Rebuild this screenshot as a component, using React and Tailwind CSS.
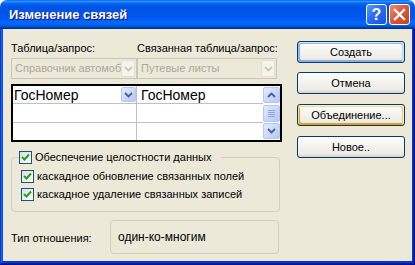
import React from 'react';

const btnBase =
  "h-[22px] w-full rounded-[3px] border border-[#003c74] bg-[linear-gradient(180deg,#ffffff_0%,#f4f3ee_45%,#ecebe6_85%,#d6d0c5_100%)] text-[11px] text-black flex items-center justify-center";

function TitleButtons() {
  return (
    <div className="flex gap-[2px]">
      <div className="w-[21px] h-[21px] rounded-[3px] border border-white bg-[linear-gradient(135deg,#5a9bff_0%,#2a6cf0_45%,#1a55dc_100%)] flex items-center justify-center text-white font-bold text-[16px] leading-none">
        ?
      </div>
      <div className="w-[21px] h-[21px] rounded-[3px] border border-white bg-[linear-gradient(135deg,#f08d6b_0%,#e0593a_45%,#c63f1c_100%)] flex items-center justify-center">
        <svg width="13" height="13" viewBox="0 0 13 13">
          <path d="M2 2 L11 11 M11 2 L2 11" stroke="#fff" strokeWidth="2.4" strokeLinecap="square" />
        </svg>
      </div>
    </div>
  );
}

function Chevron({ color = "#4d6185", up = false }) {
  return (
    <svg width="9" height="6" viewBox="0 0 9 6">
      <path
        d={up ? "M1 5 L4.5 1.5 L8 5" : "M1 1 L4.5 4.5 L8 1"}
        fill="none"
        stroke={color}
        strokeWidth="1.8"
      />
    </svg>
  );
}

function DisabledCombo({ text, className }) {
  return (
    <div className={"h-[21px] border border-[#c9c7ba] flex items-center justify-between pl-[3px] pr-[1px] " + className}>
      <span className="text-[#aca899] text-[11px] whitespace-nowrap">{text}</span>
      <div className="w-[14px] h-[17px] shrink-0 rounded-[2px] border border-[#e1e0d6] bg-[#f5f4ea] flex items-center justify-center">
        <Chevron color="#c9c7ba" />
      </div>
    </div>
  );
}

function BlueBtn({ children, className = "" }) {
  return (
    <div className={"rounded-[2px] border border-[#b4c8f6] bg-[linear-gradient(135deg,#e3ebff_0%,#c6d6fc_60%,#b4c8f6_100%)] flex items-center justify-center " + className}>
      {children}
    </div>
  );
}

function Check() {
  return (
    <div className="w-[13px] h-[13px] shrink-0 border border-[#1c5180] bg-[linear-gradient(135deg,#dcdcd7_0%,#ffffff_100%)] flex items-center justify-center">
      <svg width="9" height="9" viewBox="0 0 9 9">
        <path d="M1 4 L3.5 6.5 L8 1.5" fill="none" stroke="#21a121" strokeWidth="2" />
      </svg>
    </div>
  );
}

export default function App() {
  return (
    <div className="w-[415px] h-[265px] bg-white font-['Liberation_Sans',Arial,sans-serif] flex flex-col">
      <div className="h-[29px] shrink-0 rounded-t-[7px] bg-[linear-gradient(to_bottom,#0058ee_0%,#3593ff_4%,#288eff_6%,#127dff_8%,#036ffc_10%,#0262ee_14%,#0057e5_20%,#0054e3_24%,#0055eb_56%,#005bf5_66%,#026afe_76%,#0062ef_86%,#0052d6_92%,#0040ab_94%,#003092_100%)] flex items-center justify-between pl-[9px] pr-[5px]">
        <span className="text-white font-bold text-[13px] [text-shadow:1px_1px_#0f1089]">Изменение связей</span>
        <TitleButtons />
      </div>
      <div className="flex-1 bg-[#0831d9] px-[3px] pb-[4px] shadow-[inset_-1px_-1px_#00138c,inset_1px_0_#0831d9,inset_-2px_-2px_#001ea0,inset_2px_0_#166aee,inset_-3px_-3px_#003bda,inset_3px_0_#0855dd]">
        <div className="h-full bg-[#ece9d8] flex pl-[8px] pt-[12px] text-[11px] text-black">
          <div className="w-[271px] flex flex-col">
            <div className="flex h-[14px] leading-[14px] mb-[3px]">
              <span className="w-[126px]">Таблица/запрос:</span>
              <span>Связанная таблица/запрос:</span>
            </div>
            <div className="flex">
              <DisabledCombo text="Справочник автомоб" className="w-[126px]" />
              <DisabledCombo text="Путевые листы" className="w-[140px]" />
            </div>

            <div className="mt-[5px] h-[58px] border-2 border-black bg-white flex">
              <div className="w-[124px] flex flex-col border-r border-[#c0c0c0]">
                <div className="h-[18px] border-b border-[#c0c0c0] flex items-center justify-between pl-[1px]">
                  <span className="text-[14px] leading-none">ГосНомер</span>
                  <BlueBtn className="w-[15px] h-[15px]">
                    <Chevron />
                  </BlueBtn>
                </div>
                <div className="h-[19px] border-b border-[#c0c0c0]" />
                <div className="flex-1" />
              </div>
              <div className="flex-1 flex flex-col">
                <div className="h-[18px] border-b border-[#c0c0c0] flex items-center pl-[4px]">
                  <span className="text-[14px] leading-none">ГосНомер</span>
                </div>
                <div className="h-[19px] border-b border-[#c0c0c0]" />
                <div className="flex-1" />
              </div>
              <div className="w-[17px] flex flex-col justify-between py-[1px] bg-[#fcfcfe]">
                <BlueBtn className="h-[16px]">
                  <Chevron up />
                </BlueBtn>
                <BlueBtn className="h-[17px] flex-col gap-[1px]">
                  <div className="w-[7px] h-px bg-[#8ca4dc]" />
                  <div className="w-[7px] h-px bg-[#8ca4dc]" />
                  <div className="w-[7px] h-px bg-[#8ca4dc]" />
                  <div className="w-[7px] h-px bg-[#8ca4dc]" />
                </BlueBtn>
                <BlueBtn className="h-[16px]">
                  <Chevron />
                </BlueBtn>
              </div>
            </div>

            <fieldset className="mt-[9px] w-[269px] h-[61px] border border-[#d0d0bf] rounded-[4px] pl-[9px] pb-[9px]">
              <legend className="-ml-[2px] pr-[10px] flex items-center gap-[3px]">
                <Check />
                <span className="leading-[13px]">Обеспечение целостности данных</span>
              </legend>
              <div className="flex flex-col gap-[5px] mt-[6px]">
                <div className="flex items-center gap-[3px] h-[13px]">
                  <Check />
                  <span>каскадное обновление связанных полей</span>
                </div>
                <div className="flex items-center gap-[3px] h-[13px]">
                  <Check />
                  <span>каскадное удаление связанных записей</span>
                </div>
              </div>
            </fieldset>

            <div className="mt-[8px] flex items-center">
              <span className="w-[99px] mt-[3px]">Тип отношения:</span>
              <div className="w-[169px] h-[34px] border border-[#d0d0bf] rounded-[4px] flex items-center pl-[7px] text-[12px]">
                один-ко-многим
              </div>
            </div>
          </div>

          <div className="ml-[15px] w-[108px] flex flex-col">
            <div className={btnBase + " shadow-[inset_-1px_1px_#cee7ff,inset_1px_2px_#98b8ea,inset_-2px_2px_#bcd4f6,inset_1px_-1px_#89ade4,inset_2px_-2px_#89ade4]"}>
              Создать
            </div>
            <div className={btnBase + " mt-[9px]"}>Отмена</div>
            <div className={btnBase + " mt-[10px] shadow-[inset_-1px_1px_#fff0cf,inset_1px_2px_#fdd889,inset_-2px_2px_#fbc761,inset_2px_-2px_#e5a01a]"}>
              Объединение...
            </div>
            <div className={btnBase + " mt-[10px]"}>Новое..</div>
          </div>
        </div>
      </div>
    </div>
  );
}
